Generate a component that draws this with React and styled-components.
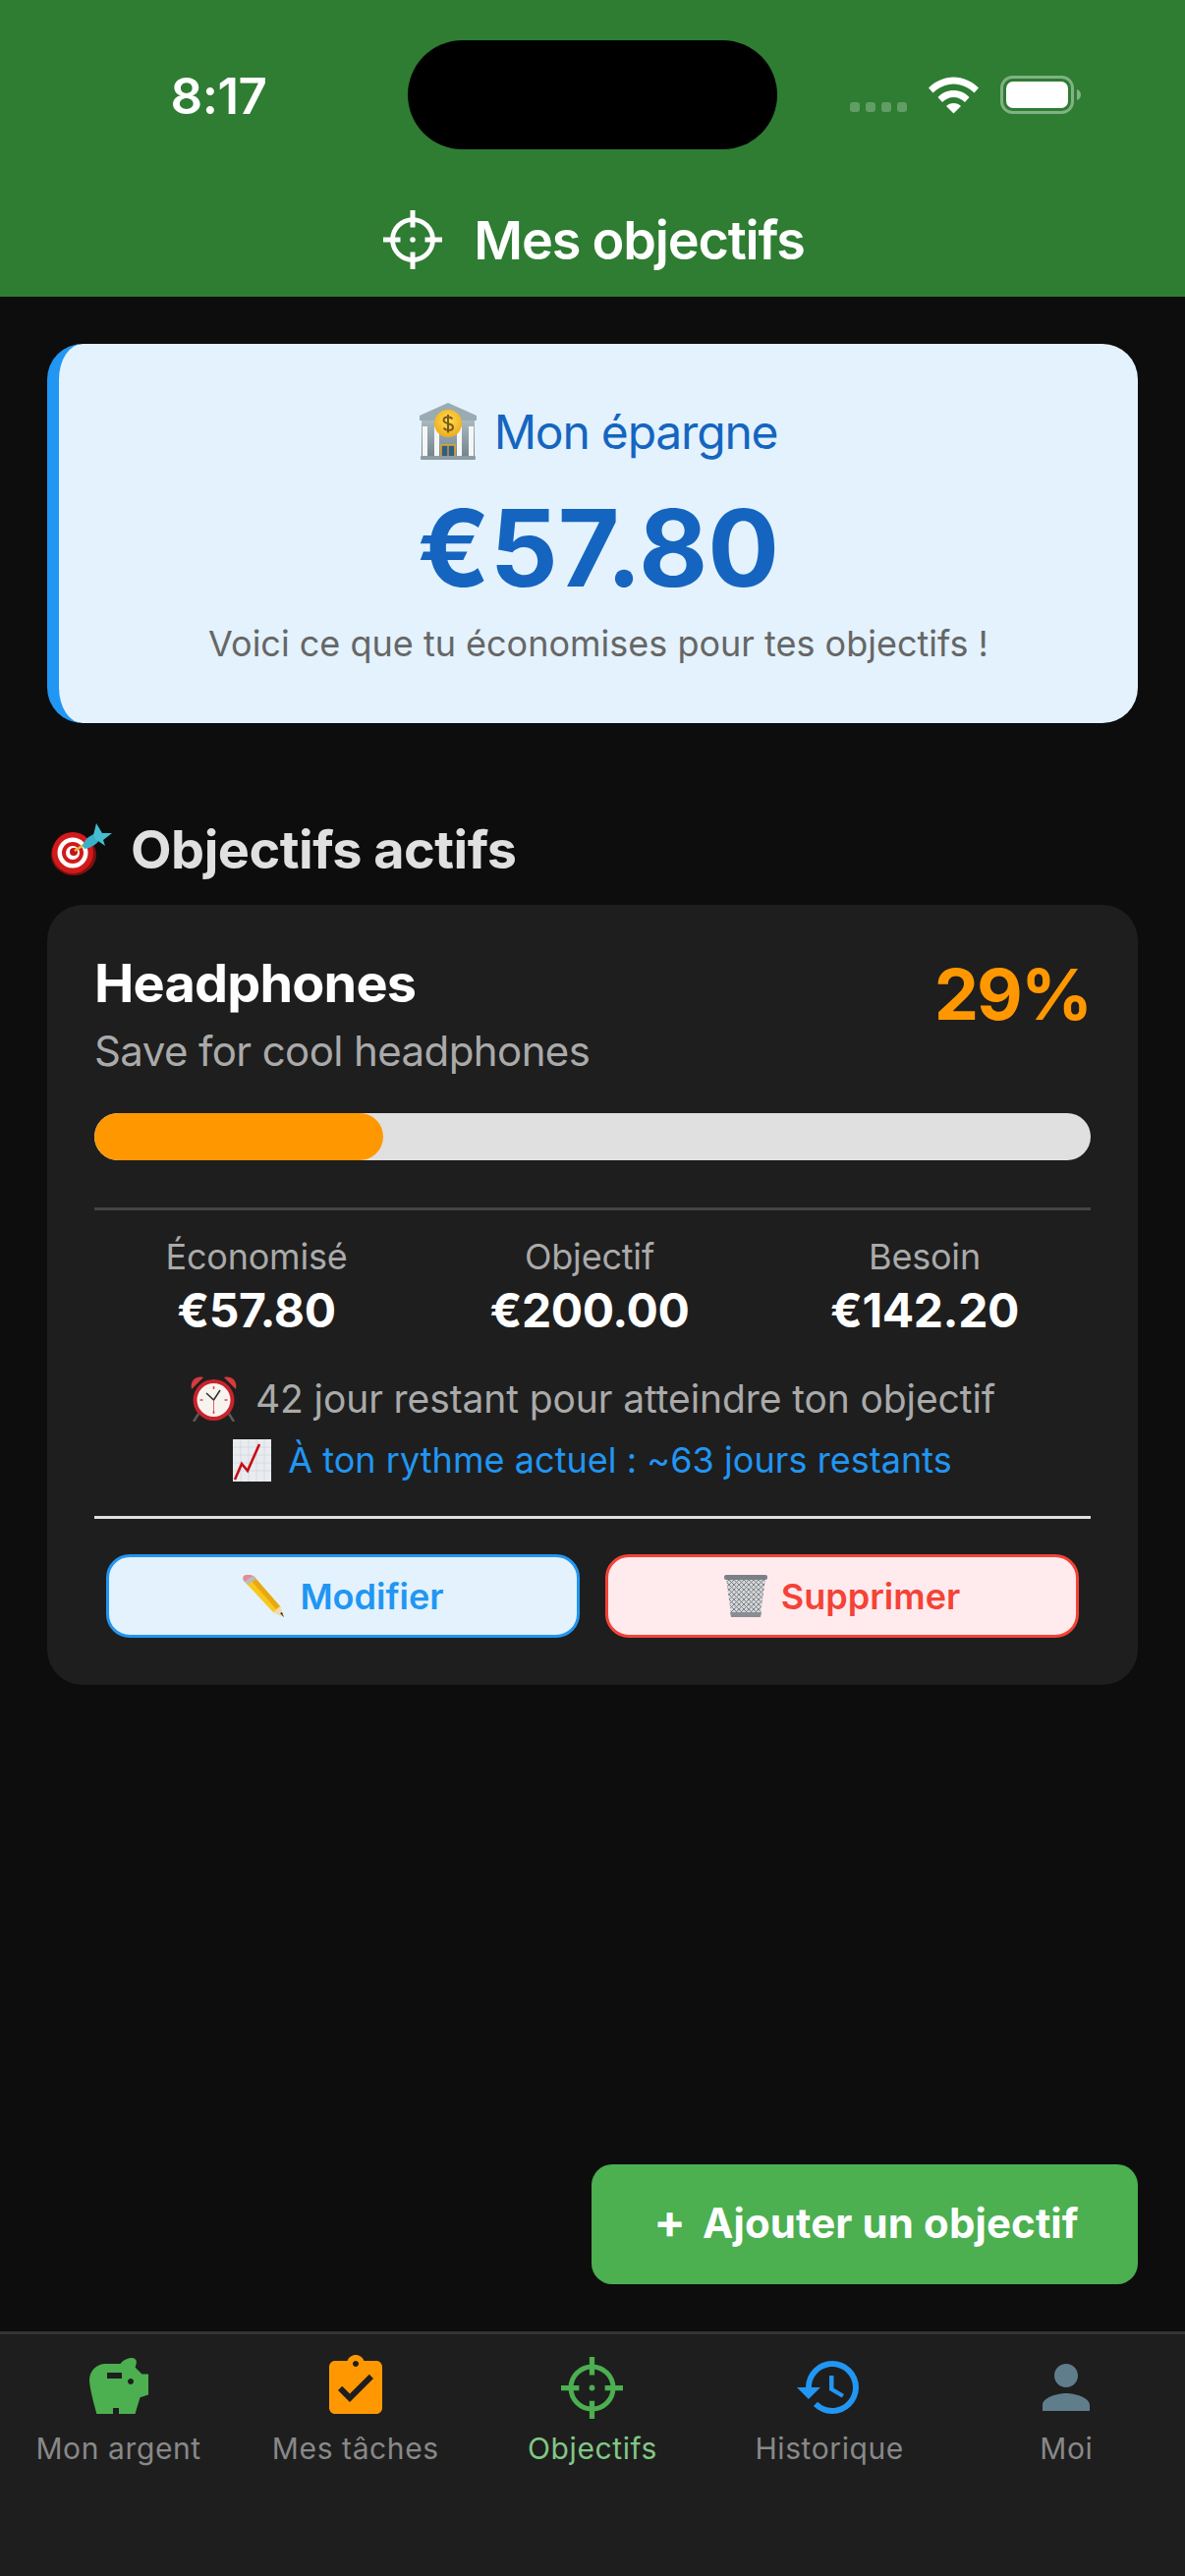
import React from 'react'
import styled, { createGlobalStyle } from 'styled-components'
import { MdSavings, MdAssignmentTurnedIn, MdHistory, MdPerson } from 'react-icons/md'

const GlobalStyle = createGlobalStyle`
  html, body {
    margin: 0;
    padding: 0;
    background: #0d0d0d;
  }
  * {
    box-sizing: border-box;
  }
`

const Screen = styled.div`
  position: relative;
  display: flex;
  flex-direction: column;
  width: 1206px;
  height: 2622px;
  overflow: hidden;
  background: #0d0d0d;
  font-family: Inter, 'Noto Sans', sans-serif;
`

const Header = styled.header`
  height: 302px;
  flex: none;
  padding-top: 41px;
  background: #2e7d32;
`

const StatusBar = styled.div`
  display: grid;
  grid-template-columns: 415px 376px 415px;
  height: 111px;
`

const Clock = styled.div`
  align-self: center;
  padding: 1px 0 0 30px;
  text-align: center;
  font-size: 51px;
  font-weight: 600;
  letter-spacing: -0.5px;
  color: #fff;
`

const Island = styled.div`
  border-radius: 56px;
  background: #000;
`

const StatusIcons = styled.div`
  display: flex;
  align-items: center;
  justify-content: flex-end;
  padding-right: 106px;
`

const HeaderTitle = styled.h1`
  display: flex;
  align-items: center;
  justify-content: center;
  gap: 32px;
  margin: 62px 0 0;
  padding-left: 3px;
  height: 60px;
  font-size: 54px;
  font-weight: 600;
  letter-spacing: -1.2px;
  color: #fff;
`

const Main = styled.main`
  flex: 1;
  padding: 48px;
`

const SavingsCard = styled.section`
  height: 386px;
  padding-top: 60px;
  border-left: 12px solid #2196f3;
  border-radius: 36px;
  background: #e3f2fd;
  text-align: center;
`

const SavingsLabel = styled.div`
  display: flex;
  align-items: center;
  justify-content: center;
  gap: 18px;
  height: 58px;
  font-size: 48px;
  letter-spacing: -1.2px;
  color: #1565c0;
`

const SavingsAmount = styled.div`
  margin-top: 25px;
  font-size: 108px;
  line-height: 130px;
  font-weight: 700;
  color: #1565c0;
`

const SavingsHint = styled.div`
  margin-top: 8px;
  font-size: 36px;
  line-height: 48px;
  color: #666;
`

const SectionTitle = styled.h2`
  display: flex;
  align-items: center;
  gap: 19px;
  height: 56px;
  margin: 100px 0 0;
  padding-left: 3px;
  font-size: 54px;
  font-weight: 700;
  letter-spacing: -0.5px;
  color: #e0e0e0;
`

const GoalCard = styled.article`
  height: 794px;
  margin-top: 29px;
  padding: 48px;
  border-radius: 36px;
  background: #1e1e1e;
`

const GoalTop = styled.div`
  display: flex;
  justify-content: space-between;
  height: 116px;
`

const GoalName = styled.div`
  font-size: 54px;
  line-height: 64px;
  font-weight: 700;
  letter-spacing: -0.8px;
  color: #fff;
`

const GoalDescription = styled.div`
  margin-top: 12px;
  font-size: 42px;
  line-height: 50px;
  letter-spacing: -0.6px;
  color: #aaa;
`

const GoalPercent = styled.div`
  font-size: 72px;
  line-height: 86px;
  font-weight: 700;
  letter-spacing: -2px;
  color: #ff9800;
`

const ProgressTrack = styled.div`
  height: 48px;
  margin-top: 48px;
  border-radius: 24px;
  background: #e0e0e0;
  overflow: hidden;
`

const ProgressFill = styled.div`
  height: 100%;
  border-radius: 24px;
  background: #ff9800;
`

const Stats = styled.div`
  display: grid;
  grid-template-columns: 330px 348px 334px;
  height: 118px;
  margin-top: 48px;
  padding-top: 25px;
  border-top: 3px solid #444;
  box-sizing: content-box;
  text-align: center;
`

const StatLabel = styled.div`
  font-size: 36px;
  line-height: 44px;
  letter-spacing: -0.2px;
  color: #aaa;
`

const StatValue = styled.div`
  margin-top: 4px;
  font-size: 48px;
  line-height: 58px;
  font-weight: 700;
  letter-spacing: -0.4px;
  color: #fff;
`

const InfoLine = styled.div`
  display: flex;
  align-items: center;
  justify-content: center;
  gap: ${({ $gap }) => $gap}px;
  height: ${({ $height }) => $height}px;
  margin-top: ${({ $top }) => $top}px;
  font-size: ${({ $size }) => $size}px;
  letter-spacing: ${({ $spacing }) => $spacing}px;
  color: ${({ $color }) => $color};
`

const Actions = styled.div`
  display: flex;
  gap: 26px;
  margin-top: 30px;
  padding: 36px 12px 0;
  border-top: 3px solid #e0e0e0;
`

const ActionButton = styled.button`
  display: flex;
  flex: 1;
  align-items: center;
  justify-content: center;
  gap: 14px;
  height: 85px;
  padding: 0;
  border: 3px solid ${({ $color }) => $color};
  border-radius: 24px;
  background: ${({ $bg }) => $bg};
  font-family: inherit;
  font-size: 36px;
  font-weight: 600;
  color: ${({ $color }) => $color};
`

const AddButton = styled.button`
  position: absolute;
  right: 48px;
  bottom: 297px;
  display: flex;
  align-items: center;
  justify-content: center;
  gap: 17px;
  width: 556px;
  height: 122px;
  padding: 0 0 3px 3px;
  border: 0;
  border-radius: 21px;
  background: #4caf50;
  font-family: inherit;
  font-size: 42px;
  font-weight: 700;
  letter-spacing: 0.1px;
  color: #fff;
`

const PlusSign = styled.span`
  padding-bottom: 3px;
  font-size: 48px;
  line-height: 1;
`

const TabBar = styled.nav`
  display: grid;
  grid-template-columns: repeat(5, 1fr);
  align-content: start;
  flex: none;
  height: 249px;
  padding-top: 18px;
  border-top: 3px solid #333;
  background: #1e1e1e;
`

const Tab = styled.div`
  display: flex;
  flex-direction: column;
  align-items: center;
`

const TabIconBox = styled.div`
  display: flex;
  flex: none;
  align-items: center;
  justify-content: center;
  width: 72px;
  height: 72px;
  color: ${({ $color }) => $color};
`

const TabLabel = styled.div`
  margin-top: 8px;
  font-size: 30px;
  line-height: 36px;
  letter-spacing: 0.6px;
  color: ${({ $active }) => ($active ? '#81c784' : '#888')};
`

function Crosshair({ size, color }) {
  return (
    <svg width={size} height={size} viewBox="0 0 24 24" fill="none" stroke={color}>
      <circle cx="12" cy="12" r="8.2" strokeWidth="1.9" />
      <path d="M12 0v7M12 17v7M0 12h7M17 12h7" strokeWidth="2" />
      <circle cx="12" cy="12" r="1.1" fill={color} stroke="none" />
    </svg>
  )
}

function SignalDots() {
  return (
    <svg width="58" height="39" viewBox="0 0 58 39" fill="#fff" fillOpacity="0.25">
      <rect x="0" y="27" width="10" height="10" rx="3" />
      <rect x="16" y="27" width="10" height="10" rx="3" />
      <rect x="32" y="27" width="10" height="10" rx="3" />
      <rect x="48" y="27" width="10" height="10" rx="3" />
    </svg>
  )
}

function WifiIcon() {
  return (
    <svg width="51" height="38" viewBox="0 0 51 38" fill="#fff" style={{ marginLeft: 22 }}>
      <path d="M0 11.5C7 4.5 16 0.5 25.5 0.5S44 4.5 51 11.5L46.5 16.5C40.5 11 33.5 7.5 25.5 7.5S10.500 11 4.500 16.500Z" />
      <path d="M9.500 21C13.500 16.500 19.500 14 25.500 14S37.500 16.500 41.500 21L37 26C34 23 30 21 25.500 21S17 23 14 26Z" />
      <path d="M18 30C20 28 22.500 27 25.500 27S31 28 33 30L25.500 37.500Z" />
    </svg>
  )
}

function BatteryIcon() {
  return (
    <svg width="82" height="39" viewBox="0 0 82 39" style={{ marginLeft: 22 }}>
      <rect x="1.5" y="1.5" width="72" height="36" rx="11" fill="none" stroke="#fff" strokeOpacity="0.4" strokeWidth="3" />
      <rect x="6" y="6" width="63" height="27" rx="7" fill="#fff" />
      <path d="M78 14c2.500 .5 4 3 4 5.500s-1.500 5-4 5.500z" fill="#fff" fillOpacity="0.4" />
    </svg>
  )
}

function BankEmoji() {
  return (
    <svg width="58" height="58" viewBox="0 0 58 58">
      <defs>
        <linearGradient id="bankWall" x1="0" y1="0" x2="0" y2="1">
          <stop offset="0" stopColor="#a9b9bf" />
          <stop offset="1" stopColor="#74868e" />
        </linearGradient>
        <radialGradient id="bankCoin" cx="0.5" cy="0.4" r="0.6">
          <stop offset="0" stopColor="#ffe04f" />
          <stop offset="1" stopColor="#f0ab1c" />
        </radialGradient>
      </defs>
      <path d="M29 0L58 13v5H0v-5z" fill="#9aabb2" />
      <rect x="2" y="18" width="54" height="36" fill="url(#bankWall)" />
      <rect x="3" y="24" width="5" height="30" fill="#f4f6f6" />
      <rect x="15" y="24" width="5" height="30" fill="#f4f6f6" />
      <rect x="38" y="24" width="5" height="30" fill="#f4f6f6" />
      <rect x="50" y="24" width="5" height="30" fill="#f4f6f6" />
      <rect x="22" y="43" width="14" height="14" fill="#2f5d84" stroke="#e0a92a" strokeWidth="1.500" />
      <path d="M29 43v14" stroke="#e0a92a" strokeWidth="1.200" />
      <rect x="1" y="54" width="56" height="4" rx="1" fill="#8d9ca3" />
      <circle cx="29" cy="21" r="14" fill="url(#bankCoin)" />
      <path d="M33.500 16.500c-1-1.500-2.800-2-4.500-2-2.500 0-4.500 1.200-4.500 3.300 0 4.500 9.500 2.400 9.500 6.900 0 2.100-2 3.300-4.500 3.300-2 0-3.800-.7-5-2.300M29 12v18.500" fill="none" stroke="#7a5a1e" strokeWidth="2" />
    </svg>
  )
}

function DartEmoji() {
  return (
    <svg width="63" height="53" viewBox="0 0 63 53">
      <ellipse cx="24" cy="32" rx="23" ry="21" fill="#7f1010" />
      <circle cx="23" cy="30" r="21" fill="#d21a1a" />
      <circle cx="23" cy="30" r="15.500" fill="#fff" />
      <circle cx="23" cy="30" r="11" fill="#d21a1a" />
      <circle cx="23" cy="30" r="7" fill="#fff" />
      <circle cx="24" cy="29" r="4" fill="#c01616" />
      <path d="M25 28L37 20" stroke="#e8b83a" strokeWidth="2.500" />
      <path d="M33 23c2-6 6-10 12-12l5 6c-3 5-9 8-15 9z" fill="#39b0c8" />
      <path d="M44 12L47 0l6 10 10 0-9 7 2 6-10-7z" fill="#45bdd2" />
    </svg>
  )
}

function AlarmEmoji() {
  return (
    <svg width="49" height="47" viewBox="0 0 49 47">
      <path d="M9 39l-5 8M40 39l5 8" stroke="#5a5a5a" strokeWidth="2.500" />
      <path d="M2 14C0 6 6 0 14 2z" fill="#d83a3e" />
      <path d="M47 14C49 6 43 0 35 2z" fill="#d83a3e" />
      <circle cx="24.500" cy="25" r="21" fill="#c8242c" />
      <circle cx="24.500" cy="25" r="17" fill="#f7f4f0" />
      <path d="M24.500 11v3M24.500 36v3M10.500 25h3M35.500 25h3" stroke="#d4484a" strokeWidth="1.500" />
      <path d="M17 18l7.500 7 6.500-10" fill="none" stroke="#333" strokeWidth="1.600" />
      <path d="M24.500 25v13" stroke="#d83a3e" strokeWidth="0.800" />
    </svg>
  )
}

function ChartEmoji() {
  return (
    <svg width="39" height="43" viewBox="0 0 39 43">
      <rect width="39" height="43" fill="#e9ecef" />
      <path d="M0 8h39M0 16h39M0 24h39M0 32h39M8 0v43M16 0v43M24 0v43M32 0v43" stroke="#ccd2d8" strokeWidth="0.600" />
      <path d="M2 41L9 25 l6 7L27 5" fill="none" stroke="#c40f16" strokeWidth="2.600" />
    </svg>
  )
}

function PencilEmoji() {
  return (
    <svg width="45" height="43" viewBox="0 0 45 43">
      <path d="M3 7L12 1 39 32 43 43 32 38z" fill="#f8c81e" />
      <path d="M12 1L39 32 35 35 8 4z" fill="#e9a711" />
      <path d="M3 7C0 4 1 1 4 0s5 0 8 1z" fill="#e88a90" />
      <path d="M3 7L12 1 15 4 6 10z" fill="#b8bcc0" />
      <path d="M32 38L39 32 43 43z" fill="#f0dcb0" />
      <path d="M39 39L41 38 43 43z" fill="#333" />
    </svg>
  )
}

function TrashEmoji() {
  return (
    <svg width="44" height="43" viewBox="0 0 44 43">
      <defs>
        <pattern id="trashMesh" width="5" height="5" patternUnits="userSpaceOnUse">
          <rect width="5" height="5" fill="#d4d6d8" />
          <path d="M0 0l5 5M5 0L0 5" stroke="#767a80" strokeWidth="0.900" />
        </pattern>
      </defs>
      <path d="M2 4h40l-5 36H7z" fill="url(#trashMesh)" />
      <rect x="0" y="0" width="44" height="5" rx="2" fill="#7b8086" />
      <path d="M6 38h32l-1 5H7z" fill="#8a8e94" />
    </svg>
  )
}

const tabs = [
  { label: 'Mon argent', color: '#4caf50', Icon: MdSavings },
  { label: 'Mes tâches', color: '#ff9800', Icon: MdAssignmentTurnedIn },
  { label: 'Objectifs', color: '#4caf50', active: true },
  { label: 'Historique', color: '#2196f3', Icon: MdHistory },
  { label: 'Moi', color: '#607d8b', Icon: MdPerson },
]

export default function App() {
  const progress = 29

  return (
    <Screen>
      <GlobalStyle />
      <Header>
        <StatusBar>
          <Clock>8:17</Clock>
          <Island />
          <StatusIcons>
            <SignalDots />
            <WifiIcon />
            <BatteryIcon />
          </StatusIcons>
        </StatusBar>
        <HeaderTitle>
          <Crosshair size={60} color="#fff" />
          Mes objectifs
        </HeaderTitle>
      </Header>

      <Main>
        <SavingsCard>
          <SavingsLabel>
            <BankEmoji />
            Mon épargne
          </SavingsLabel>
          <SavingsAmount>€57.80</SavingsAmount>
          <SavingsHint>Voici ce que tu économises pour tes objectifs !</SavingsHint>
        </SavingsCard>

        <SectionTitle>
          <DartEmoji />
          Objectifs actifs
        </SectionTitle>

        <GoalCard>
          <GoalTop>
            <div>
              <GoalName>Headphones</GoalName>
              <GoalDescription>Save for cool headphones</GoalDescription>
            </div>
            <GoalPercent>{progress}%</GoalPercent>
          </GoalTop>
          <ProgressTrack>
            <ProgressFill style={{ width: `${progress}%` }} />
          </ProgressTrack>
          <Stats>
            <div>
              <StatLabel>Économisé</StatLabel>
              <StatValue>€57.80</StatValue>
            </div>
            <div>
              <StatLabel>Objectif</StatLabel>
              <StatValue>€200.00</StatValue>
            </div>
            <div>
              <StatLabel>Besoin</StatLabel>
              <StatValue>€142.20</StatValue>
            </div>
          </Stats>
          <InfoLine $gap={18} $height={62} $top={17} $size={39} $spacing={-0.1} $color="#aaa">
            <AlarmEmoji />
            42 jour restant pour atteindre ton objectif
          </InfoLine>
          <InfoLine $gap={17} $height={54} $top={5} $size={36} $spacing={0.05} $color="#2196f3">
            <ChartEmoji />
            À ton rythme actuel : ~63 jours restants
          </InfoLine>
          <Actions>
            <ActionButton $color="#2196f3" $bg="#e3f2fd">
              <PencilEmoji />
              Modifier
            </ActionButton>
            <ActionButton $color="#f44336" $bg="#ffebee">
              <TrashEmoji />
              Supprimer
            </ActionButton>
          </Actions>
        </GoalCard>
      </Main>

      <AddButton>
        <PlusSign>+</PlusSign>
        <span>Ajouter un objectif</span>
      </AddButton>

      <TabBar>
        {tabs.map(({ label, color, Icon, active }) => (
          <Tab key={label}>
            <TabIconBox $color={color}>
              {Icon ? <Icon size={72} /> : <Crosshair size={63} color={color} />}
            </TabIconBox>
            <TabLabel $active={active}>{label}</TabLabel>
          </Tab>
        ))}
      </TabBar>
    </Screen>
  )
}
